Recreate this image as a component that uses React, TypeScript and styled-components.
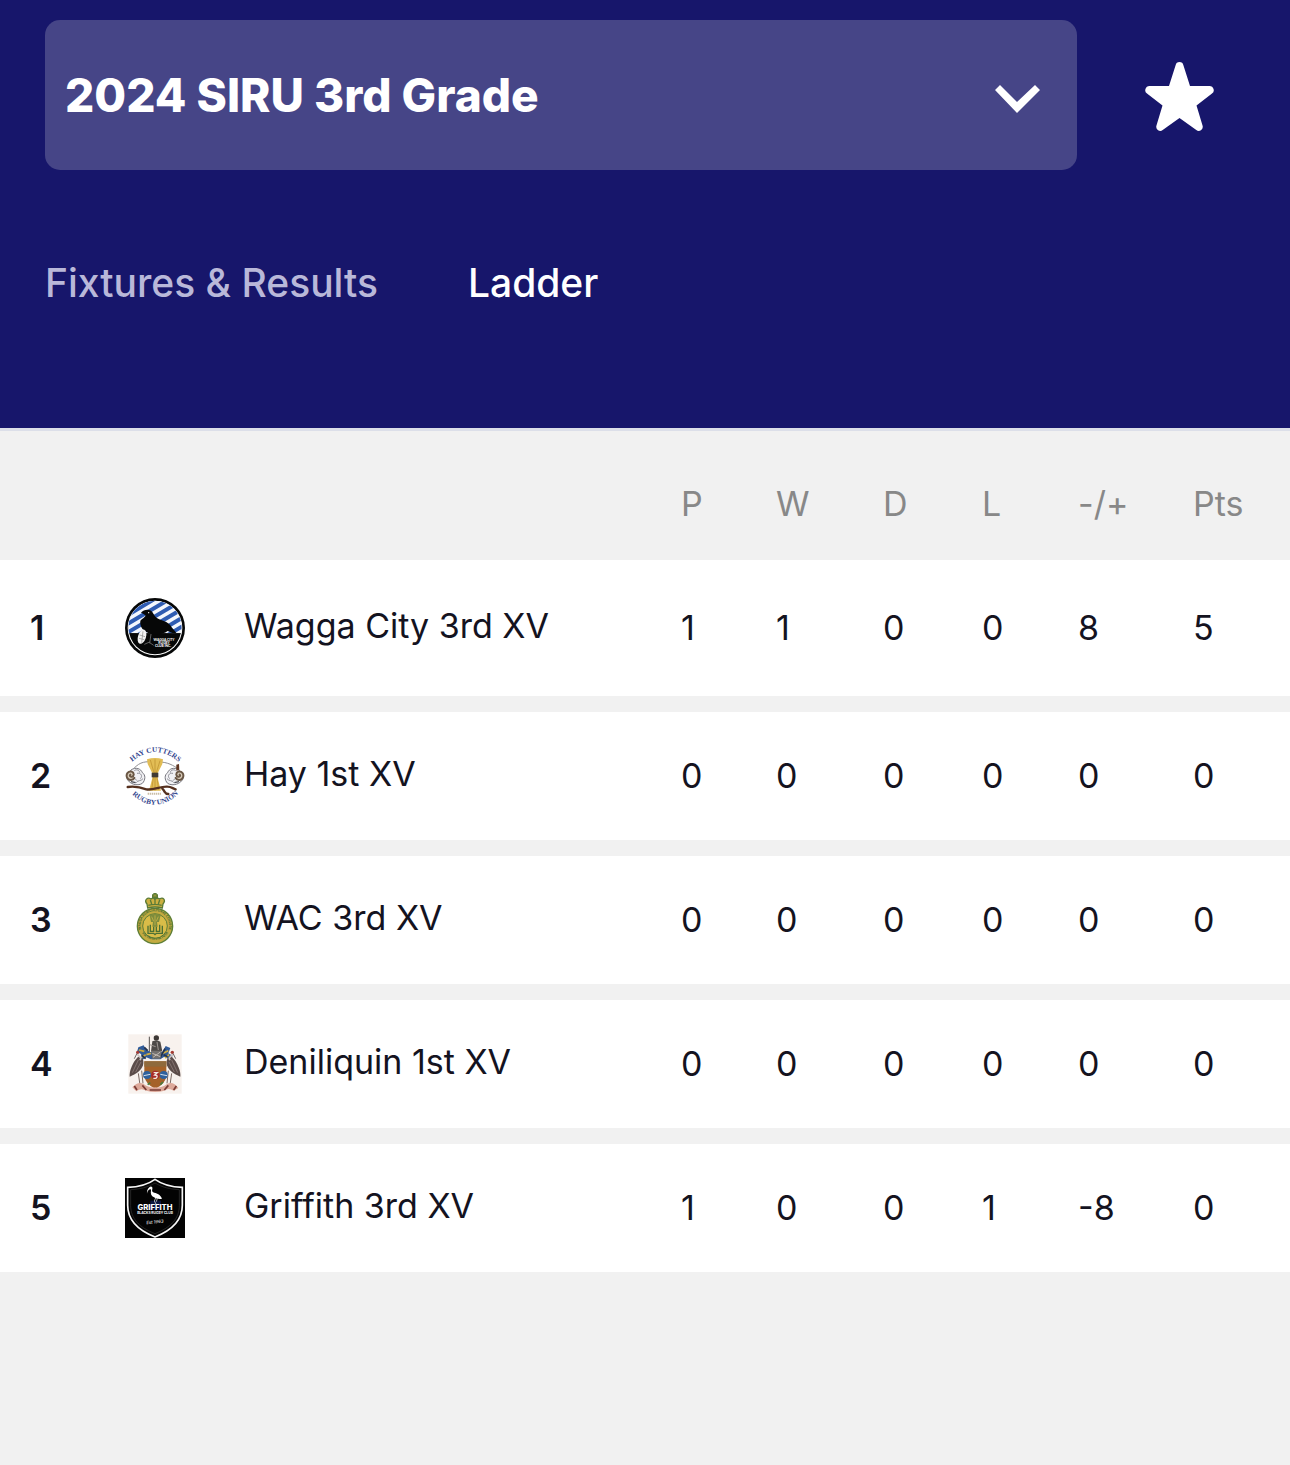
import React from 'react';
import styled, { createGlobalStyle } from 'styled-components';

const color = {
  navy: '#17166b',
  page: '#f1f1f1',
  ink: '#14131f',
  muted: '#888888',
};

const GlobalStyle = createGlobalStyle`
  *, *::before, *::after { box-sizing: border-box; }
  body {
    margin: 0;
    background: ${color.page};
    color: ${color.ink};
    font-family: Inter, 'Open Sans', sans-serif;
  }
`;

const Header = styled.header`
  background: ${color.navy};
  border-bottom: 3px solid #dcdfe9;
  padding: 20px 0 120px 45px;
`;

const Toolbar = styled.div`
  display: flex;
  align-items: stretch;
  gap: 45px;
  padding-right: 53px;
`;

const Picker = styled.div`
  flex: 1;
  display: grid;
  align-items: center;
  min-width: 0;
`;

const PickerSelect = styled.select`
  grid-area: 1 / 1;
  width: 100%;
  height: 150px;
  padding: 0 100px 0 20px;
  border: 0;
  border-radius: 15px;
  appearance: none;
  background: #464587;
  color: #ffffff;
  font: 800 46px/60px Inter, 'Open Sans', sans-serif;
`;

const PickerArrow = styled.svg`
  grid-area: 1 / 1;
  justify-self: end;
  width: 45px;
  height: 28px;
  margin: 8px 37px 0 0;
  pointer-events: none;
`;

const FavouriteButton = styled.button`
  display: flex;
  align-items: center;
  justify-content: center;
  width: 115px;
  padding: 4px 0 0;
  border: 0;
  background: none;
  color: #ffffff;
`;

const Tabs = styled.nav`
  display: flex;
  gap: 90px;
  padding-top: 88px;
`;

const Tab = styled.a<{ $active?: boolean }>`
  color: ${({ $active }) => ($active ? '#ffffff' : '#b9b8d9')};
  font-size: 39px;
  font-weight: 500;
  line-height: 50px;
  text-decoration: none;
`;

const Table = styled.table`
  width: 100%;
  table-layout: fixed;
  border-collapse: separate;
  border-spacing: 0;
  font-size: 34px;
  line-height: 44px;
`;

const Column = styled.col<{ $width?: number }>`
  width: ${({ $width }) => ($width ? `${$width}px` : 'auto')};
`;

const HeadCell = styled.th`
  height: 129px;
  padding: 16px 0 0 30px;
  color: ${color.muted};
  font-weight: 400;
  text-align: left;
`;

const Cell = styled.td`
  height: 144px;
  padding: 0 0 0 30px;
  border-bottom: 16px solid ${color.page};
  background: #ffffff;
  text-align: left;

  tr:first-child > & {
    height: 152px;
  }
`;

const RankCell = styled(Cell)`
  font-weight: 600;
`;

const TeamName = styled.span`
  display: block;
  padding-bottom: 4px;
  white-space: nowrap;
`;

const Crest = styled.svg`
  display: block;
  width: 60px;
  height: 60px;
`;

const crestBox = '30 30 180 180';

function WaggaCrest() {
  return (
    <Crest viewBox={crestBox} role="img" aria-label="Wagga City">
      <defs>
        <clipPath id="wagga-sky">
          <path d="M42 136A80 80 0 1 1 198 136Z" />
        </clipPath>
      </defs>
      <circle cx="120" cy="120" r="90" fill="#060707" />
      <circle cx="120" cy="120" r="82" fill="#fff" />
      <circle cx="120" cy="120" r="79" fill="#060707" />
      <g clipPath="url(#wagga-sky)">
        <rect x="30" y="30" width="180" height="108" fill="#f4f7fd" />
        <path
          d="M20 92L150 14M20 118L176 26M20 144L200 38M20 170L220 52M60 174L230 72M100 176L240 92M134 182L240 118"
          stroke="#2f5cb2"
          strokeWidth="12"
        />
      </g>
      <path
        d="M78 74C86 64 104 62 112 72C118 82 122 90 136 95C154 100 166 108 170 118L184 134C176 137 168 134 158 129C146 139 124 142 106 137C84 130 74 116 76 98C82 92 88 88 92 83C88 78 83 76 78 74Z"
        fill="#060707"
      />
      <ellipse cx="81" cy="146" rx="12" ry="22" transform="rotate(18 81 146)" fill="#f2f2f2" />
      <path d="M84 130L80 164M74 141L90 146M72 151L88 155" stroke="#888" strokeWidth="2" />
      <path d="M108 138L104 166M104 162L88 169M104 164L116 172" stroke="#8c8c8c" strokeWidth="2" fill="none" />
      <circle cx="101" cy="74" r="2" fill="#fff" />
      <g fill="#fff" fontFamily="Lato, sans-serif" fontWeight="900" fontSize="10" textAnchor="middle">
        <text x="147" y="158">WAGGA CITY</text>
        <text x="147" y="168">RUGBY</text>
        <text x="144" y="178">CLUB INC.</text>
      </g>
    </Crest>
  );
}

function Ram({ flip = false }: { flip?: boolean }) {
  return (
    <g transform={flip ? 'translate(240 0) scale(-1 1)' : undefined}>
      <path
        d="M48 102C62 92 78 98 82 110C92 116 92 132 82 142C70 150 50 146 42 136C34 132 34 118 42 114Z"
        fill="#f1f1f4"
        stroke="#77777f"
        strokeWidth="3"
      />
      <path
        d="M58 104C66 98 74 104 74 110M66 112C78 110 84 120 76 128M64 140C68 132 78 136 84 128M60 128L66 134"
        stroke="#8f8f97"
        strokeWidth="3"
        fill="none"
      />
      <path
        d="M58 126C54 134 40 134 36 124C32 114 40 104 50 107C58 110 58 120 51 122C46 123 43 119 46 116"
        fill="#d9cdbb"
        stroke="#6a5745"
        strokeWidth="6"
        strokeLinecap="round"
      />
      <path d="M48 137L62 140" stroke="#4c4c52" strokeWidth="4" />
    </g>
  );
}

function HayCrest() {
  return (
    <Crest viewBox={crestBox} role="img" aria-label="Hay Cutters Rugby Union">
      <defs>
        <path id="hay-top" d="M44 84Q120 12 198 84" />
        <path id="hay-bottom" d="M38 162Q120 252 204 160" />
      </defs>
      <g
        fill="#35478f"
        fontFamily="'Liberation Serif', serif"
        fontWeight="700"
        fontSize="22"
      >
        <text textAnchor="middle">
          <textPath href="#hay-top" startOffset="50%">HAY CUTTERS</textPath>
        </text>
        <text textAnchor="middle">
          <textPath href="#hay-bottom" startOffset="50%">RUGBY UNION</textPath>
        </text>
      </g>
      <path d="M56 98C76 76 92 76 120 78C150 76 168 84 186 96" fill="none" stroke="#8e8e92" strokeWidth="3" />
      <path d="M96 70Q120 62 144 70L142 84L128 112V126L138 164H102L112 126V112L98 84Z" fill="#e2bd55" />
      <path d="M106 72L117 110L110 162M120 70V164M135 74L124 110L131 162" stroke="#b98d2c" strokeWidth="2" fill="none" />
      <rect x="110" y="110" width="20" height="14" fill="#413b35" />
      <path d="M98 173H138" stroke="#c9bda6" strokeWidth="6" strokeDasharray="4 2" />
      <Ram />
      <Ram flip />
      <path
        d="M38 153C60 150 78 154 94 160C114 164 136 150 158 152C168 152 174 158 182 160M142 158C152 168 148 174 160 174"
        fill="none"
        stroke="#55301e"
        strokeWidth="7"
        strokeLinecap="round"
      />
      <path d="M184 86L192 84L193 102L184 104Z" fill="#5d3521" />
    </Crest>
  );
}

function WacCrest() {
  return (
    <Crest viewBox={crestBox} role="img" aria-label="Wagga Agricultural College">
      <defs>
        <path id="wac-top" d="M79 151A43 43 0 1 1 160 151" />
        <path id="wac-bottom" d="M75 150A49 49 0 0 0 165 150" />
      </defs>
      <circle cx="120" cy="138" r="55" fill="#5f7f37" />
      <circle cx="120" cy="138" r="51" fill="#c3ab40" />
      <circle cx="120" cy="138" r="37" fill="#d9bc48" stroke="#5f7d36" strokeWidth="3" />
      <g fill="#3f6a31" fontFamily="Lato, sans-serif" fontWeight="900" fontSize="10" textAnchor="middle">
        <text>
          <textPath href="#wac-top" startOffset="50%">WAGGA AGRICULTURAL COLLEGE</textPath>
        </text>
        <text>
          <textPath href="#wac-bottom" startOffset="50%">VIA TRITA VIA TUTA</textPath>
        </text>
      </g>
      <path
        d="M98 84L96 72C86 60 98 50 108 57C112 54 116 54 118 56V51H113V45H117V41H123V45H127V51H122V56C126 54 130 54 134 57C144 50 154 60 144 72L142 84Q120 78 98 84Z"
        fill="#cdb041"
        stroke="#5b7b36"
        strokeWidth="4"
      />
      <path d="M100 76Q120 70 140 76M120 56V72M106 60L110 72M134 60L130 72" fill="none" stroke="#5b7b36" strokeWidth="4" />
      <path d="M104 106Q120 98 137 106L132 126H126L128 140H112L114 126H108Z" fill="#7d8c3c" />
      <path d="M110 110L116 124M120 106V136M130 110L124 124" stroke="#d9bc48" strokeWidth="2" />
      <path d="M99 137V160H116L120 164L124 160H142V137M106 134V154H116V140M134 134V154H124V140" fill="none" stroke="#4c7034" strokeWidth="4" />
    </Crest>
  );
}

function Brolga({ flip = false }: { flip?: boolean }) {
  return (
    <g transform={flip ? 'translate(240 0) scale(-1 1)' : undefined}>
      <path d="M68 100C82 96 88 110 84 124C78 140 64 150 44 158C42 144 52 116 68 100Z" fill="#5b4c49" />
      <path d="M70 108L52 146M78 114L62 144" stroke="#988783" strokeWidth="2" />
      <path d="M74 108C86 100 62 96 68 86" fill="none" stroke="#c9c2c0" strokeWidth="5" />
      <circle cx="68" cy="85" r="5" fill="#a53a32" />
      <path d="M66 88L58 104" stroke="#6d6462" strokeWidth="3" />
      <path d="M70 148L76 190M80 140L84 178" stroke="#7b6a64" strokeWidth="3" />
    </g>
  );
}

function DeniliquinCrest() {
  return (
    <Crest viewBox={crestBox} role="img" aria-label="Deniliquin coat of arms">
      <rect x="40" y="31" width="160" height="178" fill="#f8f2ee" />
      <path d="M103 38V88" stroke="#55504e" strokeWidth="3" />
      <circle cx="124" cy="42" r="8" fill="#3d3836" />
      <path d="M112 52Q124 46 136 53L142 82H108Z" fill="#4e4a48" />
      <path d="M104 62L122 68M126 54L130 78" stroke="#9e9692" strokeWidth="3" />
      <path
        d="M70 70L86 64L92 76L106 84H142L152 66L166 72L160 88L174 96L158 104L148 98L136 106H108L94 100L82 108L78 90L66 84Z"
        fill="#315b98"
      />
      <path d="M72 78L88 82M94 92L108 88M144 88L160 80M82 100L92 92M150 102L162 92" stroke="#d2ac3f" strokeWidth="5" />
      <path d="M88 70L98 80M136 100L150 74M80 94L92 104M146 92L158 98" stroke="#24314a" strokeWidth="5" />
      <path d="M108 80H140L136 104H112Z" fill="#73706e" />
      <path d="M112 88L136 98M114 100L136 84" stroke="#c2bbb5" strokeWidth="3" />
      <Brolga />
      <Brolga flip />
      <path d="M88 112H154V156Q150 182 121 194Q92 182 88 156Z" fill="#a56229" />
      <path d="M88 112H154V128H88Z" fill="#8f6a3c" />
      <circle cx="96" cy="153" r="12" fill="#2f619d" />
      <circle cx="146" cy="153" r="12" fill="#2f619d" />
      <path d="M86 155L106 151M136 151L156 155" stroke="#d5e0eb" strokeWidth="3" />
      <circle cx="121" cy="153" r="13" fill="#a72b2a" />
      <path d="M116 146H127L119 153Q132 154 123 163H115" fill="none" stroke="#f1e6dc" strokeWidth="4" />
      <path d="M52 190Q70 170 86 180Q100 192 121 190Q142 192 156 180Q174 170 190 192L176 200Q160 190 148 200Q120 208 94 200Q78 190 64 202Z" fill="#dda99a" />
      <path d="M66 198L58 186M82 184L94 198M104 198H138M160 184L148 198M176 198L184 186" stroke="#783b34" strokeWidth="5" />
      <path d="M98 182L106 176M136 182L144 174" stroke="#487b3d" strokeWidth="5" />
    </Crest>
  );
}

function GriffithCrest() {
  return (
    <Crest viewBox={crestBox} role="img" aria-label="Griffith Blacks Rugby Club">
      <rect x="30" y="30" width="180" height="180" fill="#030303" />
      <path
        d="M120 34C98 50 70 57 38 58V112C38 156 66 186 120 207C174 186 202 156 202 112V58C170 57 142 50 120 34Z"
        fill="#030303"
        stroke="#f7f7f7"
        strokeWidth="5"
      />
      <path d="M120 45C98 58 74 64 47 65V112C47 152 72 178 120 197C168 178 193 152 193 112V65C166 64 142 58 120 45Z" fill="none" stroke="#6b6b6b" strokeWidth="1" />
      <path d="M106 98H138V126H106Z" fill="#0c1440" />
      <path
        d="M103 58C108 53 114 57 112 63C110 70 112 73 118 74C128 76 136 80 141 92C132 94 124 92 117 88C109 84 106 78 108 66L106 63C100 65 97 70 96 77C95 69 98 62 103 58Z"
        fill="#fff"
      />
      <path d="M122 90L118 99L124 110M127 91L124 101" fill="none" stroke="#fff" strokeWidth="2" />
      <g fill="#fff" fontFamily="Inter, sans-serif" textAnchor="middle">
        <text x="120" y="127" fontWeight="800" fontSize="23">GRIFFITH</text>
        <text x="120" y="139" fontWeight="700" fontSize="10">BLACKS RUGBY CLUB</text>
        <text x="120" y="166" fontStyle="italic" fontSize="13" transform="rotate(-6 120 166)">Est 1963</text>
      </g>
    </Crest>
  );
}

const columns = [
  { label: 'P', width: 95 },
  { label: 'W', width: 107 },
  { label: 'D', width: 99 },
  { label: 'L', width: 96 },
  { label: '-/+', width: 115 },
  { label: 'Pts', width: 127 },
];

const teams = [
  { name: 'Wagga City 3rd XV', Logo: WaggaCrest, stats: [1, 1, 0, 0, 8, 5] },
  { name: 'Hay 1st XV', Logo: HayCrest, stats: [0, 0, 0, 0, 0, 0] },
  { name: 'WAC 3rd XV', Logo: WacCrest, stats: [0, 0, 0, 0, 0, 0] },
  { name: 'Deniliquin 1st XV', Logo: DeniliquinCrest, stats: [0, 0, 0, 0, 0, 0] },
  { name: 'Griffith 3rd XV', Logo: GriffithCrest, stats: [1, 0, 0, 1, -8, 0] },
];

export default function App() {
  return (
    <>
      <GlobalStyle />
      <Header>
        <Toolbar>
          <Picker>
            <PickerSelect aria-label="Competition" defaultValue="siru-3">
              <option value="siru-3">2024 SIRU 3rd Grade</option>
            </PickerSelect>
            <PickerArrow viewBox="0 0 45 28" aria-hidden="true">
              <path d="M0 5L5 0L22 17L40 0L45 5L22 28Z" fill="#fff" />
            </PickerArrow>
          </Picker>
          <FavouriteButton type="button" aria-label="Favourite" aria-pressed="true">
            <svg width="69" height="70" viewBox="0 0 69 70" aria-hidden="true">
              <path
                d="M30.6 3.2A4 4 0 0 1 38.4 3.2L45 24H64.5A4.2 4.2 0 0 1 67 31.6L51.5 43.5L57.6 63.8A4 4 0 0 1 51.3 68L34.5 56L17.7 68A4 4 0 0 1 11.4 63.8L17.5 43.5L2 31.6A4.2 4.2 0 0 1 4.5 24H24Z"
                fill="currentColor"
              />
            </svg>
          </FavouriteButton>
        </Toolbar>
        <Tabs>
          <Tab href="#fixtures">Fixtures &amp; Results</Tab>
          <Tab href="#ladder" aria-current="page" $active>
            Ladder
          </Tab>
        </Tabs>
      </Header>
      <main>
        <Table>
          <colgroup>
            <Column $width={95} />
            <Column $width={119} />
            <Column />
            {columns.map(({ label, width }) => (
              <Column key={label} $width={width} />
            ))}
          </colgroup>
          <thead>
            <tr>
              <HeadCell aria-label="Position" />
              <HeadCell aria-label="Logo" />
              <HeadCell aria-label="Team" />
              {columns.map(({ label }) => (
                <HeadCell key={label} scope="col">
                  {label}
                </HeadCell>
              ))}
            </tr>
          </thead>
          <tbody>
            {teams.map(({ name, Logo, stats }, index) => (
              <tr key={name}>
                <RankCell>{index + 1}</RankCell>
                <Cell>
                  <Logo />
                </Cell>
                <Cell>
                  <TeamName>{name}</TeamName>
                </Cell>
                {stats.map((value, i) => (
                  <Cell key={columns[i].label}>{value}</Cell>
                ))}
              </tr>
            ))}
          </tbody>
        </Table>
      </main>
    </>
  );
}
